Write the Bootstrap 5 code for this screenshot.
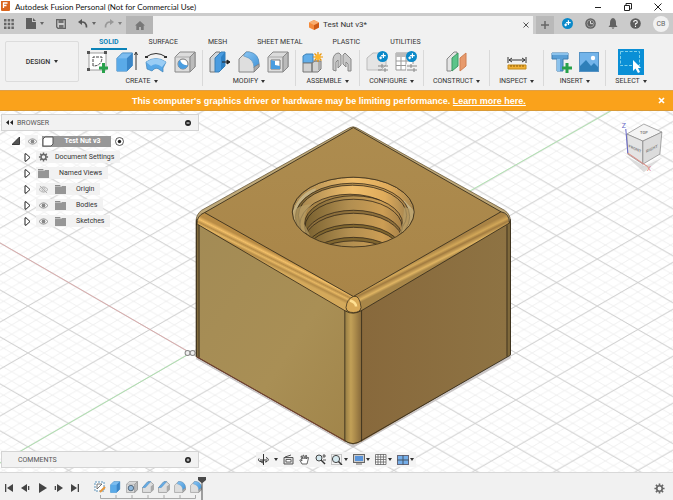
<!DOCTYPE html>
<html lang="en">
<head>
<meta charset="utf-8">
<meta name="viewport" content="width=device-width, initial-scale=1">
<title>Autodesk Fusion Personal</title>
<link href="https://cdn.jsdelivr.net/npm/bootstrap@5.3.0/dist/css/bootstrap.min.css" rel="stylesheet">
<style>
body{font-family:Roboto,"Liberation Sans",sans-serif;font-size:7px;line-height:10px;color:#333;background:#f1f1f1}
button{font:inherit;color:inherit;background:none;border:0;padding:0;display:inline-flex;align-items:center;justify-content:center}
svg{flex:none;display:block}
.titlebar{height:13px;background:#fff;color:#111}
.app-name{font-family:Lato,sans-serif;font-size:8px}
.win-btn{width:30px;height:10px}
.tabstrip{height:21px;background:#cbcbcb;color:#666}
.home-tab{width:27px;height:18px;background:#b5b5b5;margin-top:3px}
.doc-tab{background:#f1f1f1;margin-top:3px;font-size:8px;color:#333}
.new-tab{width:18px;height:18px;background:#b9b9b9;margin:3px 4px 0 3px}
.caret-dn{width:0;height:0;border:2px solid transparent;border-top:3px solid currentColor;border-bottom:0;display:inline-block}
.avatar{width:16px;height:16px;background:#f1f1f1;font-size:7px}
.quick{width:126px}
.status{width:115px}
.ribbon{height:56px}
.workspace{width:74px;height:41px;margin:7px 2px 0 5px;border:1px solid #dcdcdc;border-radius:2px}
.medium{font-weight:500}
.mode-tabs{height:16px;gap:30px;padding:3px 18px 0}
.mode-tabs a{color:#333;text-decoration:none;height:11px;line-height:11px}
.mode-tabs .current{color:#0b83b8;font-weight:700;box-shadow:0 2px 0 #0b83b8;padding:0 8px;margin:0 -8px}
.tool-group{padding:0 6px;border-right:1px solid #d9d9d9;height:36px}
.tool-group.wide{padding:0 9px}
.tool-group.last{border:0}
.tools{gap:7px;height:24px}
.tool-label{gap:3px;margin-top:2px;height:10px}
.notice{height:21px;background:#faa21b;color:#fff;font-family:"Liberation Sans",sans-serif;font-size:9px;font-weight:700;border-top:1px solid #dfa048;border-bottom:1px solid #d99a35}
.viewport{background:#fff}
.scene{position:absolute;left:0;top:0;width:100%;height:100%}
.browser{margin-top:3px}
.palette{width:198px;height:17px;background:#f2f2f2;border:1px solid #d4d4d4;margin-left:1px;padding:0 7px 0 4px;color:#555}
.tree{margin:3px 0 0 12px}
.tree li{height:14px;margin-bottom:2px}
.tree .child{margin-left:12px}
.item{height:12px;background:rgba(241,241,241,.9);gap:6px;padding:0 6px 0 2px;margin-left:5px}
.root-name{background:#989898;color:#fff;font-weight:700;height:11px;width:69px;margin:0 0 0 4px}
.navbar-view{background:rgba(243,243,243,.9);height:15px;padding:0 2px;gap:5px;margin-left:12%}
.navbar-view button{gap:1px}
.timeline{height:28px;border-top:1px solid #d8d8d8}
.play{width:76px;margin:3px 10px 0 4px}
.features{gap:4px;margin-left:8px;padding-top:5px}
.c33{color:#333}
</style>
<script src="https://cdn.jsdelivr.net/npm/bootstrap@5.3.0/dist/js/bootstrap.bundle.min.js"></script>
</head>
<body class="d-flex flex-column vh-100 overflow-hidden">
<svg width="0" height="0" class="position-absolute" aria-hidden="true">
<defs>
<linearGradient id="blu" x1="0" y1="0" x2="1" y2="1"><stop stop-color="#8cc6f3"/><stop offset="1" stop-color="#3f93d8"/></linearGradient>
<symbol id="eye" viewBox="0 0 12 10"><path d="M1 5Q6-1 11 5Q6 11 1 5Z" fill="#fff" stroke="#888"/><circle cx="6" cy="5" r="2.2" fill="#888"/></symbol>
<symbol id="folder" viewBox="0 0 11 9"><path d="M0 0h5l1 1.5H0Z" fill="#8b8b8b"/><path d="M0 2h6l1-1h4v8H0Z" fill="#969696"/></symbol>
<symbol id="tri" viewBox="0 0 7 9"><path d="M1 .8V8.200L2 8.200 6 4.500 2 .8Z" fill="#fff" stroke="#222"/></symbol>
<symbol id="gear" viewBox="0 0 12 12"><circle cx="6" cy="6" r="3" fill="none" stroke="#666" stroke-width="1.800"/><path d="M6 .5V2.500M6 9.500V11.500M.5 6H2.500M9.500 6H11.500M2.100 2.100 3.500 3.500M8.500 8.500 9.900 9.900M2.100 9.900 3.500 8.500M8.500 3.500 9.900 2.100" stroke="#666" stroke-width="1.800"/></symbol>
<symbol id="box" viewBox="0 0 22 22"><path d="M1 6 6 1H21V16L16 21H1Z" fill="#dcdcdc" stroke="#888"/><path d="M1 6H16V21M16 6 21 1" fill="none" stroke="#aaa"/><path d="M16 6 21 1V16L16 21Z" fill="#bbb" stroke="#888"/></symbol>
<symbol id="fil" viewBox="0 0 22 22"><path d="M1 8 8 1H11Q21 3 21 14V16L16 21H1Z" fill="#dedede" stroke="#888"/><path d="M8 1h4Q21 3 21 13L16 17Q16 8 7 5.500L5.500 5Z" fill="url(#blu)" stroke="#5590c0" stroke-width=".6"/><path d="M16 16V21L21 16V13Z" fill="#aaa" stroke="#777" stroke-width=".6"/></symbol>
<symbol id="chm" viewBox="0 0 22 22"><path d="M1 12 11 1H15L21 6V16L16 21H1Z" fill="#dedede" stroke="#777"/><path d="M10 2 16 1 6 12 1 12Z" fill="url(#blu)" stroke="#4f8fc6"/><path d="M16 10V21L21 16V6Z" fill="#aaa"/></symbol>
<symbol id="ext" viewBox="0 0 22 22"><path d="M1 7 7 1H18V15L12 21H1Z" fill="#7dbdf0" stroke="#4288c0"/><path d="M1 7H12V21H1Z" fill="#5aaae8"/><path d="M12 7 18 1V15L12 21Z" fill="#3a86c8"/></symbol>
<symbol id="plusdot" viewBox="0 0 12 12"><circle cx="6" cy="6" r="6" fill="#0a89c9"/><path d="M7 2.500V7.500M4.500 5H9.500M4 6V9M2.500 7.500H5.500" stroke="#fff" stroke-width="1.300"/></symbol>
</defs></svg>

<header class="titlebar d-flex align-items-center">
<svg width="11" height="11" viewBox="0 0 11 11"><rect x="1" y="-2" width="9" height="12" rx="1" fill="#d9641c"/><path d="M3.500 7V2h4M3.500 4.500h3" stroke="#fff" stroke-width="1.300" fill="none"/></svg>
<span class="app-name ms-1 me-auto text-nowrap">Autodesk Fusion Personal (Not for Commercial Use)</span>
<button class="win-btn" aria-label="Minimize"><svg width="8" height="8" viewBox="0 0 8 8"><path d="M1 4.500H7" stroke="#222"/></svg></button>
<button class="win-btn" aria-label="Restore"><svg width="8" height="8" viewBox="0 0 8 8"><path d="M.5 2.500H5.500V7.500H.5ZM2 2V.5H7.500V6H6" fill="none" stroke="#222"/></svg></button>
<button class="win-btn" aria-label="Close"><svg width="8" height="8" viewBox="0 0 8 8"><path d="M.5.5 7.500 7.500M7.500.5.5 7.500" stroke="#222"/></svg></button>
</header>

<nav class="tabstrip d-flex align-items-center" aria-label="Documents">
<div class="quick d-flex align-items-center ps-1">
<button aria-label="Data panel"><svg width="10" height="10" viewBox="0 0 10 10" fill="#666"><path d="M0 0h2.500v2.500H0zM3.700 0h2.500v2.500H3.700zM7.400 0h2.500v2.500H7.400zM0 3.700h2.500v2.500H0zM3.700 3.700h2.500v2.500H3.700zM7.400 3.700h2.500v2.500H7.400zM0 7.400h2.500v2.500H0zM3.700 7.400h2.500v2.500H3.700zM7.400 7.400h2.500v2.500H7.400z"/></svg></button>
<button class="ms-2 ps-1" aria-label="File"><svg width="10" height="11" viewBox="0 0 10 11"><path d="M0 0h6v4h4v7H0ZM7 0 10 3H7Z" fill="#5f5f5f"/></svg><i class="caret-dn ms-1"></i></button>
<button class="ms-2 ps-1" aria-label="Save"><svg width="10" height="10" viewBox="0 0 10 10"><path d="M.7.7H9.300V9.300H2L.7 8Z" fill="none" stroke="#606060" stroke-width="1.300"/><path d="M2.500.5h5V4h-5ZM3 6h4.500v3.500H3Z" fill="#707070"/></svg></button>
<button class="ms-2 ps-1" aria-label="Undo"><svg width="10" height="9" viewBox="0 0 10 9"><path d="M4 0V6L0 3Z" fill="#555"/><path d="M3 3Q8.500 2.500 8.500 8.500" fill="none" stroke="#555" stroke-width="1.600"/></svg><i class="caret-dn ms-1"></i></button>
<button class="ms-2 opacity-75" aria-label="Redo"><svg width="10" height="9" viewBox="0 0 10 9"><path d="M6 0V6L10 3Z" fill="#888"/><path d="M7 3Q1.500 2.500 1.500 8.500" fill="none" stroke="#888" stroke-width="1.600"/></svg><i class="caret-dn ms-1"></i></button>
</div>
<button class="home-tab" aria-label="Home"><svg width="10" height="9" viewBox="0 0 10 9"><path d="M5 0 10 4.500H8.700V9H6V6H4V9H1.300V4.500H0Z" fill="#777"/></svg></button>
<div class="doc-tab flex-grow-1 align-self-stretch d-flex align-items-center">
<span class="mx-auto d-flex align-items-center gap-1"><svg width="10" height="10" viewBox="0 0 10 10"><path d="M5 0 10 2.500V7.500L5 10 0 7.500V2.500Z" fill="#f58a3a"/><path d="M5 5 10 2.500V7.500L5 10Z" fill="#cd5a17"/><path d="M5 0 10 2.500 5 5 0 2.500Z" fill="#f9ad70"/></svg>Test Nut v3*</span>
<button class="me-1" aria-label="Close tab"><svg width="6" height="6" viewBox="0 0 6 6"><path d="M.5.5 5.500 5.500M5.500.5.5 5.500" stroke="#555"/></svg></button>
</div>
<button class="new-tab" aria-label="New tab"><svg width="8" height="8" viewBox="0 0 8 8"><path d="M4 0V8M0 4H8" stroke="#666" stroke-width="1.500"/></svg></button>
<div class="status d-flex align-items-center justify-content-between ps-1 pe-1">
<button aria-label="Extensions"><svg width="11" height="11"><use href="#plusdot"/></svg></button>
<button aria-label="Job status"><svg width="11" height="11" viewBox="0 0 11 11"><circle cx="5.500" cy="5.500" r="5.300" fill="#626262"/><circle cx="5.500" cy="5.500" r="3.500" fill="none" stroke="#aaa" stroke-width=".8"/><path d="M5.500 3V5.700H8" stroke="#ddd" fill="none"/></svg></button>
<button aria-label="Notifications"><svg width="10" height="11" viewBox="0 0 10 11"><path d="M5 0Q8 .8 8 5V7L9.500 9H.5L2 7V5Q2 .8 5 0ZM3.500 9.500h3Q5 12 3.500 9.500Z" fill="#626262"/></svg></button>
<button aria-label="Help"><svg width="11" height="11" viewBox="0 0 11 11"><circle cx="5.500" cy="5.500" r="5.300" fill="#5c5c5c"/><path d="M3.700 4.200Q3.700 2.500 5.500 2.500T7.300 4.200Q7.300 5.200 5.500 5.800V6.800M5.500 7.700V9" stroke="#fff" stroke-width="1.100" fill="none"/></svg></button>
<button class="avatar rounded-circle">CB</button>
</div>
</nav>

<section class="ribbon d-flex" aria-label="Tools">
<button class="workspace medium">DESIGN<i class="caret-dn ms-1"></i></button>
<div class="flex-grow-1">
<nav class="mode-tabs d-flex"><a class="current" href="#">SOLID</a><a href="#">SURFACE</a><a href="#">MESH</a><a href="#">SHEET METAL</a><a href="#">PLASTIC</a><a href="#">UTILITIES</a></nav>
<div class="d-flex text-nowrap">
<div class="tool-group">
<div class="tools d-flex align-items-center justify-content-center">
<button aria-label="Create sketch"><svg width="22" height="22" viewBox="0 0 22 22"><rect x="2" y="2" width="17" height="17" fill="#fff" stroke="#777" stroke-width=".7"/><path d="M0 0h3v3H0zM17 0h3v3h-3zM0 17h3v3H0z" fill="#555"/><path d="M6 15V6H15Q15 15 6 15" fill="none" stroke="#444" stroke-dasharray="3 1"/><path d="M16.500 12V22M12 17H21" stroke="#28a14b" stroke-width="3"/></svg></button>
<button aria-label="Extrude"><svg width="22" height="22" viewBox="0 0 22 22"><use href="#ext" width="20" height="22"/><path d="M20 2V19M18.500 4 20 1 21.500 4" stroke="#333" fill="none"/></svg></button>
<button aria-label="Revolve"><svg width="22" height="22" viewBox="0 0 22 22"><path d="M1 6Q11-1 21 6" fill="none" stroke="#333"/><path d="M0 5h3v2H0zM19 5h3v2h-3z" fill="#333"/><path d="M1 11Q11 4 21 11L18 17V21L15 19Q11 15 7 20L2 18Z" fill="#58a8e8" stroke="#3d82b8" stroke-width=".7"/><path d="M1 11Q11 4 21 11L17 16Q11 11 6 15Z" fill="#9acdf5"/></svg></button>
<button aria-label="Hole"><svg width="22" height="22" viewBox="0 0 22 22"><use href="#box"/><circle cx="9" cy="13" r="5" fill="#fff" stroke="#777"/><path d="M6 9A5 5 0 1 0 14 14Q8 15 6 9Z" fill="#4a9de0"/></svg></button>
</div>
<div class="d-flex justify-content-center"><button class="tool-label">CREATE<i class="caret-dn"></i></button></div>
</div>
<div class="tool-group">
<div class="tools d-flex align-items-center justify-content-center">
<button aria-label="Press pull"><svg width="22" height="22" viewBox="0 0 22 22"><path d="M1 7 7 1H11V15L6 21H1Z" fill="#cfd5da" stroke="#777"/><path d="M6 7 12 1H16V15L10 21H6Z" fill="#4a9ce0" stroke="#3b7fb5"/><path d="M12 6V19L16 15V1Z" fill="#2e82c6"/><path d="M13 11H20M18 9 21 11 18 13Z" stroke="#222" fill="#222"/></svg></button>
<button aria-label="Fillet"><svg width="22" height="22"><use href="#fil"/></svg></button>
<button aria-label="Shell"><svg width="22" height="22" viewBox="0 0 22 22"><use href="#box"/><path d="M4 9H13V18H4Z" fill="#fff" stroke="#777"/><path d="M4 9 8 10V14L13 15V18H4Z" fill="#4a9de0"/></svg></button>
</div>
<div class="d-flex justify-content-center"><button class="tool-label">MODIFY<i class="caret-dn"></i></button></div>
</div>
<div class="tool-group">
<div class="tools d-flex align-items-center justify-content-center">
<button aria-label="New component"><svg width="22" height="22" viewBox="0 0 22 22"><path d="M1 5 4 3H11V12H1Z" fill="#62aeea" stroke="#3d82b8"/><path d="M1 12H10V21H1ZM10 12 13 10H19V18L16 21H10Z" fill="#d2d2d2" stroke="#777"/><path d="M11 10H17V19" fill="none" stroke="#888"/><path d="M16 1V11M11 6H21M12.500 2.500 19.500 9.500M19.500 2.500 12.500 9.500" stroke="#e8940c" stroke-width="1.200"/><circle cx="16" cy="6" r="2.800" fill="#fdb52b"/></svg></button>
<button aria-label="Joint"><svg width="22" height="22" viewBox="0 0 22 22"><path d="M2 19V8Q3 2 8 2L10 4V14L7 17V9L5 11V20ZM20 20V8L14 2L12 4V13L15 16V11L17 13V20Z" fill="#c9c9c9" stroke="#888"/></svg></button>
</div>
<div class="d-flex justify-content-center"><button class="tool-label">ASSEMBLE<i class="caret-dn"></i></button></div>
</div>
<div class="tool-group">
<div class="tools d-flex align-items-center justify-content-center">
<button aria-label="Configure design"><svg width="22" height="22" viewBox="0 0 22 22"><path d="M1 7 7 2H20V14L15 19H1Z" fill="#e4e4e4" stroke="#bbb"/><path d="M12 15H22M12 19H22M16 13V17M19 17V21" stroke="#888"/><use href="#plusdot" x="11" y="0" width="11" height="11"/></svg></button>
<button aria-label="Configuration table"><svg width="22" height="22" viewBox="0 0 22 22"><path d="M1 2H18V19H1Z" fill="#fff" stroke="#999"/><path d="M1 2H18V6H1Z" fill="#bbb"/><path d="M1 10H18M1 14.500H18M6 6V19M11 6V19" stroke="#999"/><path d="M11 13h11v9H11z" fill="#f1f1f1"/><path d="M12 15H22M12 19H22M16 13V17M19 17V21" stroke="#888"/><use href="#plusdot" x="11" y="0" width="11" height="11"/></svg></button>
</div>
<div class="d-flex justify-content-center"><button class="tool-label">CONFIGURE<i class="caret-dn"></i></button></div>
</div>
<div class="tool-group wide">
<div class="tools d-flex align-items-center justify-content-center">
<button aria-label="Offset plane"><svg width="22" height="22" viewBox="0 0 22 22"><path d="M1 8 8 1H11V14L5 20H1Z" fill="#e4e4e4" stroke="#888"/><path d="M6 7 12 2V15L6 20Z" fill="#5cc48a" stroke="#3b9a62"/><path d="M14 7 20 2V15L14 20Z" fill="#e79a6c" stroke="#cf7f50"/></svg></button>
</div>
<div class="d-flex justify-content-center"><button class="tool-label">CONSTRUCT<i class="caret-dn"></i></button></div>
</div>
<div class="tool-group wide">
<div class="tools d-flex align-items-center justify-content-center">
<button aria-label="Measure"><svg width="22" height="22" viewBox="0 0 22 22"><path d="M2 6V12M20 6V12M3 9H19M6 7 3 9 6 11M16 7 19 9 16 11" stroke="#333" fill="none"/><path d="M2 14H20V18H2Z" fill="#f2b134" stroke="#c48a1b"/><path d="M5 14V16M8 14V16M11 14V16M14 14V16M17 14V16" stroke="#8b5d08"/></svg></button>
</div>
<div class="d-flex justify-content-center"><button class="tool-label">INSPECT<i class="caret-dn"></i></button></div>
</div>
<div class="tool-group">
<div class="tools d-flex align-items-center justify-content-center">
<button aria-label="Insert fastener"><svg width="22" height="22" viewBox="0 0 22 22"><path d="M2 2H18V8H13V20H7V8H2Z" fill="#5a9fd6" stroke="#3c7cb0"/><path d="M7 8H10V20H7ZM2 2H18V4H2Z" fill="#8bc2ec"/><path d="M17 12V22M12 17H22" stroke="#28a14b" stroke-width="3"/></svg></button>
<button aria-label="Insert image"><svg width="20" height="20" viewBox="0 0 20 20"><rect x=".5" y=".5" width="19" height="19" fill="#73b4ea" stroke="#5592c4"/><path d="M1 14 7 8 12 14 15 11 19 15V19H1Z" fill="#2f7fb9"/><circle cx="14" cy="6" r="2.200" fill="#fff"/></svg></button>
</div>
<div class="d-flex justify-content-center"><button class="tool-label">INSERT<i class="caret-dn"></i></button></div>
</div>
<div class="tool-group wide last">
<div class="tools d-flex align-items-center justify-content-center">
<button aria-label="Select"><svg width="26" height="26" viewBox="0 0 26 26"><rect width="26" height="26" fill="#0a8fd6"/><rect x="2.500" y="2.500" width="19" height="14" fill="none" stroke="#7fd0ea" stroke-dasharray="3 1.500"/><path d="M15 11V22L17.500 19.500 20 24 22 23 20 19H23Z" fill="#fff"/></svg></button>
</div>
<div class="d-flex justify-content-center"><button class="tool-label">SELECT<i class="caret-dn"></i></button></div>
</div>
</div>
</div>
</section>

<div class="notice d-flex align-items-center" role="alert">
<span class="mx-auto text-nowrap">This computer's graphics driver or hardware may be limiting performance. <a class="text-white" href="#">Learn more here.</a></span>
<button class="me-2" aria-label="Dismiss"><svg width="7" height="7" viewBox="0 0 7 7"><path d="M1 1 6 6M6 1 1 6" stroke="#fff" stroke-width="1.700"/></svg></button>
</div>

<main class="viewport flex-grow-1 position-relative d-flex flex-column">
<svg class="scene" viewBox="0 112 673 360" preserveAspectRatio="xMidYMid slice" role="img" aria-label="Square nut model">
<defs>
<pattern id="minor" patternUnits="userSpaceOnUse" x="191" y="353.300" width="16.220" height="9.360"><path d="M0 0 16.220 9.360M0 9.360 16.220 0" stroke="#ebebeb" stroke-width=".7"/></pattern>
<pattern id="major" patternUnits="userSpaceOnUse" x="191" y="353.300" width="81.100" height="46.800"><path d="M0 0 81.100 46.800M0 46.800 81.100 0" stroke="#cbcbcb" stroke-width=".9"/></pattern>
<linearGradient id="gl" x1="0" y1="0" x2="1" y2="1"><stop stop-color="#a38b55"/><stop offset=".6" stop-color="#a98f55"/><stop offset="1" stop-color="#a1854a"/></linearGradient>
<linearGradient id="gr" x1="0" y1="0" x2="1" y2="0"><stop stop-color="#88693c"/><stop offset="1" stop-color="#8e7343"/></linearGradient>
<linearGradient id="gt" x1="0" y1="0" x2="0" y2="1"><stop stop-color="#ad8c4f"/><stop offset="1" stop-color="#a98548"/></linearGradient>
<linearGradient id="gv" x1="0" y1="0" x2="1" y2="0"><stop stop-color="#957c43"/><stop offset=".35" stop-color="#c2a057"/><stop offset=".6" stop-color="#ad8c4c"/><stop offset="1" stop-color="#86683a"/></linearGradient>
<linearGradient id="fl" gradientUnits="userSpaceOnUse" x1="275" y1="254" x2="269" y2="266"><stop stop-color="#b98c45"/><stop offset=".25" stop-color="#f2bf68"/><stop offset=".45" stop-color="#b88d47"/><stop offset=".62" stop-color="#e6b763"/><stop offset=".8" stop-color="#b58c48"/><stop offset="1" stop-color="#d4a95b"/></linearGradient>
<linearGradient id="fr" gradientUnits="userSpaceOnUse" x1="428" y1="254" x2="434" y2="266"><stop stop-color="#a98345"/><stop offset=".3" stop-color="#d2a758"/><stop offset=".5" stop-color="#a17b40"/><stop offset=".8" stop-color="#dfb462"/><stop offset="1" stop-color="#a88648"/></linearGradient>
<linearGradient id="gh" x1="0" y1="0" x2="1" y2="0"><stop stop-color="#a48650"/><stop offset=".5" stop-color="#efbd6b"/><stop offset=".8" stop-color="#dfab5b"/><stop offset="1" stop-color="#a68650"/></linearGradient>
<linearGradient id="gb" x1="0" y1="0" x2="1" y2="0"><stop stop-color="#78602f"/><stop offset=".45" stop-color="#b18e50"/><stop offset=".8" stop-color="#cc9d54"/><stop offset="1" stop-color="#a68148"/></linearGradient>
<clipPath id="hole"><ellipse cx="353.200" cy="212.800" rx="60.500" ry="34.500"/></clipPath>
</defs>
<rect y="112" width="673" height="360" fill="url(#minor)"/>
<rect y="112" width="673" height="360" fill="url(#major)"/>
<path d="M0 243 191 353.300" stroke="#d9a0a0" stroke-width=".8"/><path d="M191 353.300 0 463.500M469 192 610 112" stroke="#a5e3a5" stroke-width=".8"/>
<path d="M197 358 353 446 510 357" fill="none" stroke="#c9c5c5" stroke-width="3"/>
<g stroke="#888" fill="#eee"><circle cx="188" cy="353.300" r="2.500"/><circle cx="193" cy="353.300" r="2.500"/></g>
<path d="M349 129Q353 126.500 357 129L504 211Q510 215 510 222V355L357 443Q353 445 349 443L196.500 357V222Q196.500 215 202 211Z" fill="#bea878" stroke="#5b4a2b" stroke-width=".7"/>
<path d="M199.500 225 345 311V441.500L199.500 358Z" fill="url(#gl)"/>
<path d="M361.500 311 506.500 225V357L361.500 441.500Z" fill="url(#gr)"/>
<path d="M196.500 222H199.500V358L196.500 356ZM506.500 222H510V355L506.500 357Z" fill="#806a3c"/>
<path d="M345 308H361.500V441.500Q353 446 345 441.500Z" fill="url(#gv)"/>
<path d="M205 213 353.300 297Q346 301 345.500 312L198 225Q197 216 205 213Z" fill="url(#fl)"/>
<path d="M353.300 297 500.500 212.500Q508 214 508.500 224L361.500 311Q361 302 353.300 297Z" fill="url(#fr)"/>
<path d="M353.300 128.500 500.500 212.500 353.300 297 205 213.300Z" fill="url(#gt)"/>
<g fill="none" stroke="#2d2415" stroke-width=".8">
<path d="M353.300 128.500 500.500 212.500 353.300 297 205 213.300ZM205 213.300Q197 216 197 226M500.500 212.500Q509 214 509 224M198 225 345.500 311.500Q353 316 361.500 311L508.500 224"/>
<path d="M199.500 226V358M506.500 226V357M344.800 311V441.500M361.500 311V441.500M197 357 348 442.500Q353 445 358 442.500L510 355.500M196.800 220V357M510 220V355"/>
</g>
<path d="M346 308Q347 299 353.300 297T361 308Q360 313 353.300 313T346 308" fill="#d9aa58" stroke="#2d2415" stroke-width=".7"/>
<path d="M350 301Q356 303 356 307" fill="none" stroke="#ffe092" stroke-width="2.500"/>
<path d="M197 357 345 441" stroke="#944238" stroke-width=".6"/>
<g clip-path="url(#hole)" stroke="#35291a" stroke-width=".8">
<ellipse cx="353.200" cy="212.800" rx="60.800" ry="34.800" fill="url(#gh)"/>
<path d="M293 212Q300 193 316 189L306 226 302 236Q294 226 293 212ZM414 212Q413 224 400 235L398 224 404 201Z" fill="#c5b284" stroke="none"/>
<ellipse cx="352.500" cy="217.500" rx="57" ry="33.500" fill="url(#gb)"/>
<ellipse cx="352.500" cy="216" rx="54" ry="30" fill="url(#gh)"/>
<ellipse cx="350" cy="225" rx="50" ry="30" fill="#a88548"/>
<ellipse cx="353.500" cy="225" rx="49" ry="28.500" fill="url(#gb)"/>
<ellipse cx="353.500" cy="228" rx="48.500" ry="28" fill="url(#gb)"/>
<ellipse cx="353.500" cy="239" rx="49" ry="28" fill="#8e703c"/>
<ellipse cx="353.500" cy="242" rx="49" ry="28" fill="url(#gb)"/>
<ellipse cx="353.500" cy="253" rx="49" ry="28" fill="#80662f"/>
<ellipse cx="353.500" cy="256" rx="49" ry="28" fill="url(#gb)"/>
<ellipse cx="353.500" cy="266" rx="49" ry="28" fill="#80662f"/>
<ellipse cx="353.500" cy="269.500" rx="49" ry="28" fill="url(#gb)"/>
<path d="M293 214Q294 229 310 236L304.500 225Q304 212 312 205Q296 206 293 214ZM414 210Q413 228 399 236L402.500 223 404 208Z" fill="#b9a068" fill-opacity=".7" stroke="none"/>
</g>
<ellipse cx="353.200" cy="212.800" rx="60.800" ry="34.800" fill="none" stroke="#3a2e1b" stroke-width=".8"/>
<g stroke="#777" stroke-width=".6">
<path d="M624 156 644 167 662 158 643 173Z" fill="#bbb" stroke="none" opacity=".5"/>
<path d="M626 135 643 125 661 133 642 142Z" fill="#f4f4f4"/><path d="M626 135 642 142V165L627 155Z" fill="#e4e4e4"/><path d="M642 142 661 133 659 155 642 165Z" fill="#dcdcdc"/>
</g>
<path d="M627 154 625 130" stroke="#6666c8"/><path d="M627 154 646 167" stroke="#dc8d85"/>
<g font-family="Roboto,sans-serif" text-anchor="middle"><text x="623" y="129" font-size="7" fill="#6666c8">Z</text><text x="648" y="172" font-size="7" fill="#e08078">X</text>
<g font-size="4" font-weight="700" fill="#888"><text x="643" y="135">TOP</text><text transform="translate(634 151) skewY(24)">FRONT</text><text transform="translate(651 151) skewY(-26)">RIGHT</text></g></g>
</svg>

<section class="browser position-relative" aria-label="Browser">
<div class="palette d-flex align-items-center">
<svg width="7" height="5" viewBox="0 0 7 5"><path d="M3 0V5L0 2.500ZM7 0V5L4 2.500Z" fill="#222"/></svg><span class="ms-1">BROWSER</span>
<button class="ms-auto" aria-label="Collapse browser"><svg width="6" height="6" viewBox="0 0 6 6"><circle cx="3" cy="3" r="3" fill="#222"/><path d="M1.500 3H4.500" stroke="#fff"/></svg></button>
</div>
<ul class="tree list-unstyled mb-0">
<li class="d-flex align-items-center"><svg width="8" height="8" viewBox="0 0 8 8"><path d="M7.500 0V7.500H0Z" fill="#555" stroke="#222" stroke-width=".8"/></svg>
<span class="item d-flex align-items-center pe-0"><svg width="11" height="9"><use href="#eye"/></svg></span>
<span class="root-name d-flex align-items-center"><svg width="12" height="11" viewBox="0 0 12 11"><path d="M1 3 3 1H11V8L9 10H1Z" fill="#fff" stroke="#555"/></svg><span class="mx-auto">Test Nut v3</span></span>
<label class="d-flex ms-1"><input type="radio" class="visually-hidden" checked aria-label="Activate component"><svg width="9" height="9" viewBox="0 0 9 9"><circle cx="4.500" cy="4.500" r="4" fill="#fff" stroke="#333" stroke-width=".8"/><circle cx="4.500" cy="4.500" r="1.700" fill="#222"/></svg></label></li>
<li class="child d-flex align-items-center"><svg width="7" height="9"><use href="#tri"/></svg><span class="item d-flex align-items-center"><svg width="11" height="10"><use href="#gear"/></svg>Document Settings</span></li>
<li class="child d-flex align-items-center"><svg width="7" height="9"><use href="#tri"/></svg><span class="item d-flex align-items-center"><svg width="11" height="9"><use href="#folder"/></svg><span class="ps-1">Named Views</span></span></li>
<li class="child d-flex align-items-center"><svg width="7" height="9"><use href="#tri"/></svg><span class="item d-flex align-items-center"><svg width="11" height="9" viewBox="0 0 12 10"><path d="M1 5Q6-1 11 5Q6 11 1 5ZM2 1 10 9" fill="none" stroke="#aaa"/><circle cx="6" cy="5" r="1.800" fill="none" stroke="#aaa"/></svg><svg width="11" height="9"><use href="#folder"/></svg><span class="ps-1">Origin</span></span></li>
<li class="child d-flex align-items-center"><svg width="7" height="9"><use href="#tri"/></svg><span class="item d-flex align-items-center"><svg width="11" height="9"><use href="#eye"/></svg><svg width="11" height="9"><use href="#folder"/></svg><span class="ps-1">Bodies</span></span></li>
<li class="child d-flex align-items-center"><svg width="7" height="9"><use href="#tri"/></svg><span class="item d-flex align-items-center"><svg width="11" height="9"><use href="#eye"/></svg><svg width="11" height="9"><use href="#folder"/></svg><span class="ps-1">Sketches</span></span></li>
</ul>
</section>

<div class="position-relative d-flex align-items-center mt-auto mb-1">
<div class="palette d-flex align-items-center"><span class="ms-2 ps-1">COMMENTS</span><button class="ms-auto" aria-label="Add comment"><svg width="6" height="6" viewBox="0 0 6 6"><circle cx="3" cy="3" r="3" fill="#222"/><path d="M1.500 3H4.500M3 1.500V4.500" stroke="#fff" stroke-width=".8"/></svg></button></div>
<div class="flex-grow-1 d-flex">
<div class="navbar-view d-flex align-items-center c33">
<button aria-label="Orbit"><svg width="11" height="11" viewBox="0 0 11 11"><path d="M5.500 0V11M2 6H9" stroke="#333" fill="none"/><path d="M1 4.500Q-1 7 4 8M8 3.500Q12 5 9 7.500L7 8M5.500 6.500 3.500 8 5.500 9.500" fill="none" stroke="#333"/></svg><i class="caret-dn ms-1"></i></button>
<button aria-label="Look at"><svg width="11" height="11" viewBox="0 0 11 11"><path d="M1 3.500H10V10H1ZM2 3 8 1" fill="#ddd" stroke="#555"/><path d="M3 5.500H8V8H3Z" fill="#fff" stroke="#444" stroke-width=".8"/></svg></button>
<button aria-label="Pan"><svg width="11" height="11" viewBox="0 0 11 11"><path d="M3 10 .8 6Q1 5 3 7L2 2Q3 1 4 5L4 1Q5 0 6 5L7 1Q8 1 7.500 5L9 3Q10 3 9 6L8 10Z" fill="#fff" stroke="#444" stroke-width=".8"/></svg></button>
<button aria-label="Zoom"><svg width="11" height="11" viewBox="0 0 11 11"><circle cx="4" cy="4" r="3" fill="#d5e8ee" stroke="#444"/><path d="M6 6 10 10" stroke="#333" stroke-width="1.500"/><path d="M9 0V4M7.500 2H11M8 6H11" stroke="#333" stroke-width=".8"/></svg></button>
<button aria-label="Fit"><svg width="12" height="11" viewBox="0 0 12 11"><rect x=".5" y=".5" width="10" height="10" fill="none" stroke="#999" stroke-dasharray="1 1"/><circle cx="5" cy="5" r="3.600" fill="#d5e8ee" stroke="#444"/><path d="M7.500 7.500 11 11" stroke="#333" stroke-width="1.500"/></svg><i class="caret-dn"></i></button>
<button aria-label="Display settings"><svg width="12" height="11" viewBox="0 0 12 11"><rect x=".5" y=".5" width="11" height="8" fill="#ccc" stroke="#666"/><rect x="2" y="2" width="8" height="5" fill="#5b95da"/><path d="M3 10H9" stroke="#666"/></svg><i class="caret-dn"></i></button>
<button aria-label="Grid settings"><svg width="12" height="11" viewBox="0 0 12 11"><path d="M.5 .5H11V10.500H.5ZM3 0V11M5.700 0V11M8.400 0V11M0 3H11M0 5.500H11M0 8H11" fill="#fff" stroke="#666" stroke-width=".8"/></svg><i class="caret-dn"></i></button>
<button aria-label="Viewports"><svg width="12" height="10" viewBox="0 0 12 10"><rect x=".5" y=".5" width="11" height="9" fill="#75aee9" stroke="#667"/><path d="M6 0V10M0 5H12" stroke="#456"/></svg><i class="caret-dn"></i></button>
</div></div></div>
</main>

<footer class="timeline d-flex align-items-center flex-shrink-0">
<div class="play d-flex align-items-center justify-content-between">
<button aria-label="Go to start"><svg width="10" height="8" viewBox="0 0 10 8"><path d="M9 0V8L3 4ZM1 0h1.300V8H1Z" fill="#444"/></svg></button>
<button aria-label="Step back"><svg width="9" height="8" viewBox="0 0 9 8"><path d="M6 0V8L0 4ZM7 2h1.300V6H7Z" fill="#444"/></svg></button>
<button aria-label="Play"><svg width="9" height="10" viewBox="0 0 9 10"><path d="M1 0V10L9 5Z" fill="#444"/></svg></button>
<button aria-label="Step forward"><svg width="9" height="8" viewBox="0 0 9 8"><path d="M3 0V8L9 4ZM.7 2H2V6H.7Z" fill="#444"/></svg></button>
<button aria-label="Go to end"><svg width="10" height="8" viewBox="0 0 10 8"><path d="M1 0V8L7 4ZM7.700 0H9V8H7.700Z" fill="#444"/></svg></button>
</div>
<div class="position-relative align-self-end">
<div class="features d-flex ms-1">
<button aria-label="Sketch"><svg width="12" height="12" viewBox="0 0 12 12"><rect x="1" y="1" width="9" height="9" fill="#fff" stroke="#5b91b8" stroke-dasharray="2 1"/><path d="M3 8V3H8Z" fill="none" stroke="#555" stroke-width=".8"/><path d="M6 11 11 6" stroke="#e8963a" stroke-width="2"/></svg></button>
<button aria-label="Extrude feature"><svg width="12" height="12"><use href="#ext"/></svg></button>
<button aria-label="Hole feature"><svg width="12" height="12" viewBox="0 0 22 22"><use href="#box"/><circle cx="9" cy="13" r="5" fill="#8fb8dc" stroke="#456" stroke-width="1.500"/></svg></button>
<button aria-label="Chamfer 1"><svg width="12" height="12"><use href="#chm"/></svg></button>
<button aria-label="Chamfer 2"><svg width="12" height="12"><use href="#chm"/></svg></button>
<button aria-label="Fillet 1"><svg width="12" height="12"><use href="#fil"/></svg></button>
<button aria-label="Fillet 2"><svg width="12" height="12"><use href="#fil"/></svg></button>
<svg class="position-absolute top-0 start-100 translate-middle-x" width="9" height="24" viewBox="0 0 9 24"><path d="M.5 1H8.500V4L5 7V24H4V7L.5 4Z" fill="#4a4a4a"/></svg>
</div>
<svg class="ms-1" width="108" height="7" viewBox="0 0 108 7"><path d="M6.500 2V5.500H101.500V2M22 2V5M38 2V5M54 2V5M70 2V5M86 2V5" fill="none" stroke="#aaa"/></svg>
</div>
<button class="ms-auto me-2 mt-1" aria-label="Timeline settings"><svg width="11" height="11"><use href="#gear"/></svg></button>
</footer>
</body>
</html>
